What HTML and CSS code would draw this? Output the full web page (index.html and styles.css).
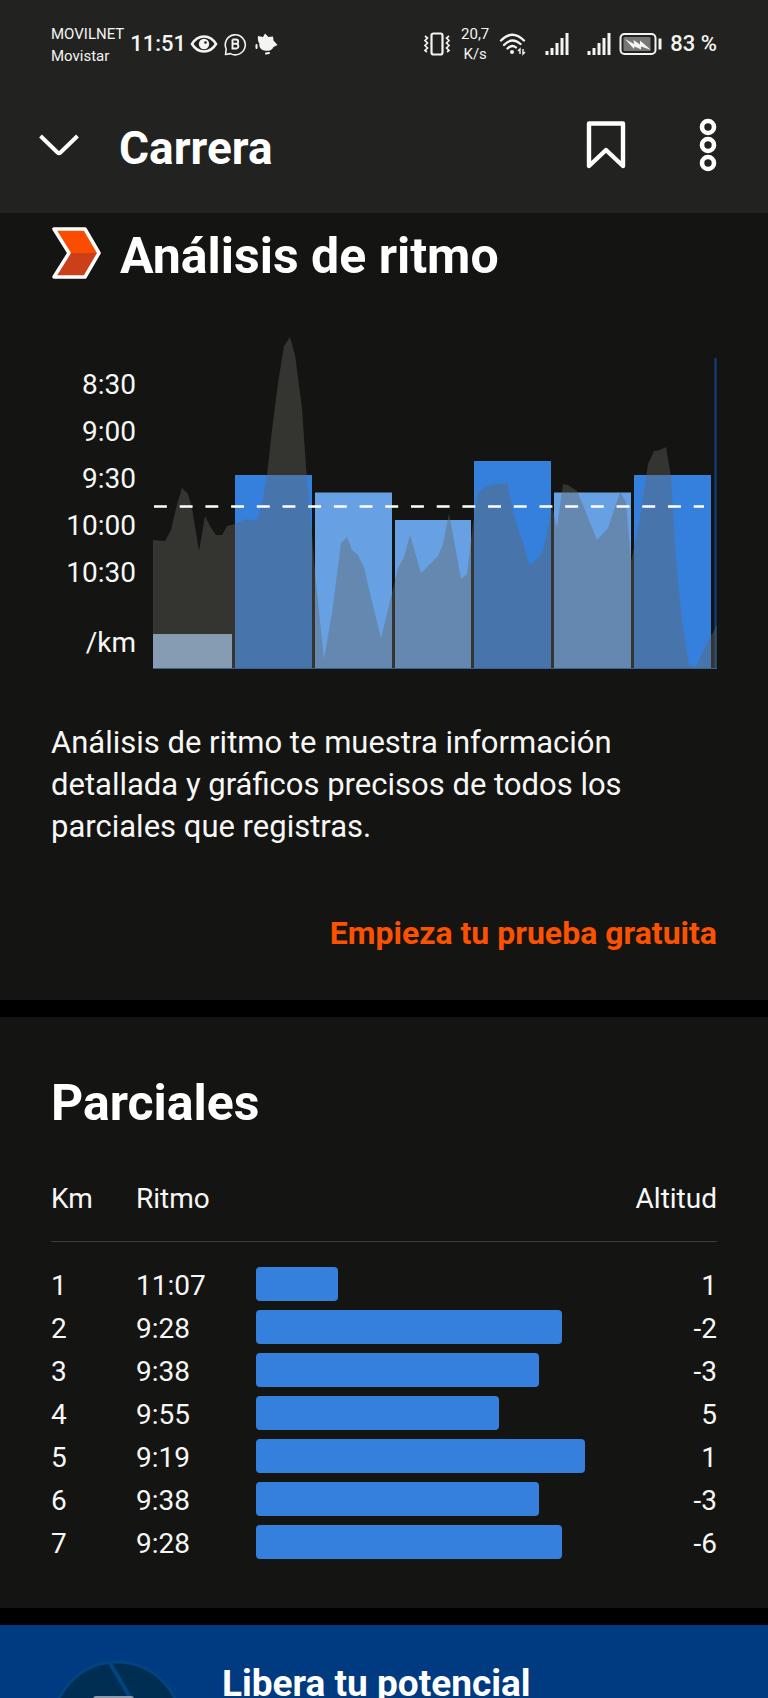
FILE: index.html
```html
<!DOCTYPE html>
<html lang="es">

<head>
    <meta charset="UTF-8">
    <meta name="viewport" content="width=device-width, initial-scale=1.0">
    <title>Carrera</title>
    <link rel="stylesheet" href="styles.css">
</head>

<body>
    <header class="top">
        <div class="status">
            <div class="status-group">
                <div class="carrier">MOVILNET<br>Movistar</div>
                <span class="clock">11:51</span>
                <svg class="eye" width="28" height="20" viewBox="0 0 28 20">
                    <path d="M2 10C5 5 9 2.500 14 2.500S23 5 26 10C23 15 19 17.500 14 17.500S5 15 2 10Z" fill="none" stroke="#f4f4f1" stroke-width="2.500" />
                    <circle cx="14" cy="10" r="5.200" fill="#f4f4f1" />
                    <circle cx="15.500" cy="8.500" r="1.300" fill="#222220" />
                </svg>
                <svg class="bubble" width="23" height="23" viewBox="0 0 23 23">
                    <path d="M1.500 21.500L2.200 16A10 10 0 1 1 6.500 20.600Z" fill="none" stroke="#f4f4f1" stroke-width="1.600" stroke-linejoin="round" />
                    <path d="M8.500 6.500V15.500H12.500A2.400 2.400 0 0 0 12.500 10.800H8.500M8.500 6.500H12A2.100 2.100 0 0 1 12 10.800" fill="none" stroke="#f4f4f1" stroke-width="1.900" />
                </svg>
                <svg width="23" height="22" viewBox="0 0 23 22">
                    <path d="M3 3L8 4L10 .5L13.500 4L18 3.500L18.500 7.500L22.500 12L18.500 14C17 17.500 13 18.500 9 17.500C5.500 16.500 4 14 4.300 10.500C3 8 2.500 5.500 3 3Z" fill="#f4f4f1" />
                    <path d="M1.500 12V15M11 20.500L14 20" stroke="#f4f4f1" stroke-width="2" stroke-linecap="round" />
                </svg>
            </div>
            <div class="status-group">
                <svg width="28" height="24" viewBox="0 0 28 24">
                    <rect x="8.500" y="1.500" width="11" height="21" rx="2" fill="none" stroke="#f4f4f1" stroke-width="2.200" />
                    <path d="M2 4L4.500 6L2 8.500L4.500 11L2 13.500L4.500 16L2 18.500L4 20M26 4L23.500 6L26 8.500L23.500 11L26 13.500L23.500 16L26 18.500L24 20" fill="none" stroke="#f4f4f1" stroke-width="1.700" />
                </svg>
                <div class="speed">20,7<br>K/s</div>
                <svg class="wifi" width="28" height="24" viewBox="0 0 28 24">
                    <path d="M2 8.500Q13 -3 25 8.500M5 13Q13 4.500 21.500 12M8.500 16.500Q13 12 17 15.500" fill="none" stroke="#f4f4f1" stroke-width="2.300" stroke-linecap="round" />
                    <circle cx="13" cy="20" r="2" fill="#f4f4f1" />
                    <path d="M19 19L21 17V22M24 17V22L26 20" fill="none" stroke="#f4f4f1" stroke-width="1.400" />
                </svg>
                <svg class="signal" width="24" height="24" viewBox="0 0 24 24">
                    <path d="M2 19V23M7 16V23M12 11V23M17 6V23M22 1V23" stroke="#f4f4f1" stroke-width="3" />
                </svg>
                <svg class="signal" width="24" height="24" viewBox="0 0 24 24">
                    <path d="M2 19V23M7 16V23M12 11V23M17 6V23M22 1V23" stroke="#f4f4f1" stroke-width="3" />
                </svg>
                <svg width="43" height="24" viewBox="0 0 43 24">
                    <rect x="1.500" y="2" width="35" height="20" rx="4" fill="none" stroke="#f4f4f1" stroke-width="2" />
                    <rect x="4.500" y="5" width="27" height="14" rx="1" fill="#777775" />
                    <path d="M6 7L15 12L14.500 8L21 12.500L21 8.500L32 18L22 14.500L22 17.500L15.500 14.500L15 17Z" fill="#f4f4f1" />
                    <path d="M41 6.500V17.500" stroke="#f4f4f1" stroke-width="3" />
                </svg>
                <span class="battery">83 %</span>
            </div>
        </div>
        <div class="appbar">
            <button class="icon-button" aria-label="Cerrar">
                <svg width="40" height="24" viewBox="0 0 40 24">
                    <path d="M1.500 3L18.500 19.500Q20 20.800 21.500 19.500L38.500 3" fill="none" stroke="#fff" stroke-width="4" />
                </svg>
            </button>
            <h1>Carrera</h1>
            <button class="icon-button" aria-label="Guardar">
                <svg width="40" height="48" viewBox="0 0 40 48">
                    <path d="M3 2.500H37V45L20 29L3 45Z" fill="none" stroke="#fff" stroke-width="4.400" stroke-linejoin="round" />
                </svg>
            </button>
            <button class="icon-button more" aria-label="Más opciones">
                <svg width="18" height="54" viewBox="0 0 18 54">
                    <g fill="none" stroke="#fff" stroke-width="4.600">
                        <circle cx="9" cy="9" r="6" />
                        <circle cx="9" cy="27" r="6" />
                        <circle cx="9" cy="45" r="6" />
                    </g>
                </svg>
            </button>
        </div>
    </header>

    <main>
        <section class="card pace">
            <div class="pace-title">
                <svg width="50" height="54" viewBox="0 0 50 54">
                    <path d="M3 3H34L48 27H18Z" fill="#fc4c02" />
                    <path d="M18 27H48L34 51H3Z" fill="#cc4019" />
                    <path d="M3 3H34L48 27L34 51H3L18 27Z" fill="none" stroke="#fff" stroke-width="3.500" stroke-linejoin="round" />
                </svg>
                <h2>Análisis de ritmo</h2>
            </div>

            <div class="chart">
                <ul class="axis">
                    <li>8:30</li>
                    <li>9:00</li>
                    <li>9:30</li>
                    <li>10:00</li>
                    <li>10:30</li>
                    <li class="unit">/km</li>
                </ul>
                <svg class="plot" viewBox="0 0 564 340" preserveAspectRatio="none">
                    <path d="M562.500 28V338" stroke="#0e4282" stroke-width="2" />
                    <rect x="0" y="304" width="79" height="34" fill="#9dc1e8" />
                    <g fill="#3580dc">
                        <rect x="82" y="145" width="77" height="193" />
                        <rect x="321" y="131" width="77" height="207" />
                        <rect x="481" y="145" width="77" height="193" />
                    </g>
                    <g fill="#67a1e4">
                        <rect x="162" y="162.500" width="77" height="175.500" />
                        <rect x="242" y="190" width="76" height="148" />
                        <rect x="401" y="162.500" width="77" height="175.500" />
                    </g>
                    <!-- elevation -->
                    <path fill="#646462" fill-opacity=".4" d="M0 338V210L12 211L18 200L20 191L24 175L29 158L35 164L39 178L46 221L52 186L57 196L63 205H69L74 196L82 194L93 189L104 190L109 173L114 145L119 100L125 53L131 16L137 7L142 25L149 78L153 137L159 203L162 243L171 329L179 283L188 213L194 207L199 220L205 225L211 237L217 263L228 308L239 263L245 238L251 227L257 205L268 243L274 237L285 226L290 214L296 183L308 249L314 244L320 193L325 163L334 156L344 154L354 153L362 190L370 212L376 235L386 228L391 217L399 177L404 197L410 154L415 155L424 161L432 180L444 210L455 198L460 183L467 162L473 172L478 232L487 187L495 134L501 121L507 120L513 117L518 147L523 230L529 290L536 335L543 337L553 315L564 295V338Z" />
                    <path d="M0 338.500H564" stroke="#3b6390" stroke-width="1.200" />
                    <path d="M1 176.500H551" stroke="#fff" stroke-width="2.600" stroke-dasharray="12.900 12.800" />
                </svg>
            </div>

            <p>Análisis de ritmo te muestra información detallada y gráficos precisos de todos los parciales que registras.</p>
            <a class="trial" href="#">Empieza tu prueba gratuita</a>
        </section>

        <section class="card splits">
            <h2>Parciales</h2>
            <table>
                <thead>
                    <tr>
                        <th class="km">Km</th>
                        <th class="ritmo">Ritmo</th>
                        <th></th>
                        <th class="alt">Altitud</th>
                    </tr>
                </thead>
                <tbody>
                    <tr><td>1</td><td>11:07</td><td class="track"><div class="bar" style="width: 25%"></div></td><td class="alt">1</td></tr>
                    <tr><td>2</td><td>9:28</td><td class="track"><div class="bar" style="width: 93%"></div></td><td class="alt">-2</td></tr>
                    <tr><td>3</td><td>9:38</td><td class="track"><div class="bar" style="width: 86%"></div></td><td class="alt">-3</td></tr>
                    <tr><td>4</td><td>9:55</td><td class="track"><div class="bar" style="width: 74%"></div></td><td class="alt">5</td></tr>
                    <tr><td>5</td><td>9:19</td><td class="track"><div class="bar" style="width: 100%"></div></td><td class="alt">1</td></tr>
                    <tr><td>6</td><td>9:38</td><td class="track"><div class="bar" style="width: 86%"></div></td><td class="alt">-3</td></tr>
                    <tr><td>7</td><td>9:28</td><td class="track"><div class="bar" style="width: 93%"></div></td><td class="alt">-6</td></tr>
                </tbody>
            </table>
        </section>

        <section class="promo">
            <svg width="132" height="132" viewBox="0 0 132 132">
                <circle cx="66" cy="66" r="64" fill="#002d52" stroke="#00457f" stroke-width="3" />
                <path d="M59 3L98 70" stroke="#00457f" stroke-width="4" />
                <rect x="42" y="36" width="41" height="70" rx="3" fill="#8e9aab" />
            </svg>
            <h3>Libera tu potencial</h3>
        </section>
    </main>
</body>

</html>
```
FILE: styles.css
```css
* {
    box-sizing: border-box;
}

body {
    margin: 0;
    display: flex;
    flex-direction: column;
    height: 100vh;
    background-color: #000;
    color: #f7f7f5;
    font-family: Roboto, "Liberation Sans", sans-serif;
    font-size: 28px;
    line-height: 36px;
}

main {
    display: flex;
    flex: 1;
    flex-direction: column;
    min-height: 0;
}

h1,
h2,
h3,
p,
ul {
    margin: 0;
    padding: 0;
}

h1,
h2,
h3 {
    color: #fff;
    font-weight: 700;
}

svg {
    display: block;
    flex: none;
}

.top {
    flex: none;
    padding: 22px 51px 9px;
    background-color: #222220;
}

.status {
    display: flex;
    justify-content: space-between;
    height: 44px;
    color: #f4f4f1;
}

.status-group {
    display: flex;
    align-items: center;
    gap: 8px;
}

.carrier,
.speed {
    font-size: 15px;
    line-height: 22px;
}

.carrier {
    padding-top: 2px;
}

.speed {
    margin: 0 2px;
    text-align: center;
    line-height: 20px;
}

.clock,
.battery {
    font-size: 22px;
    font-weight: 500;
}

.clock {
    margin-left: -2px;
    margin-right: -4px;
}

.bubble {
    margin-left: -2px;
}

.signal {
    margin-left: 10px;
}

.appbar {
    display: flex;
    align-items: center;
    height: 138px;
    padding-top: 20px;
    margin-left: -12px;
}

.appbar h1 {
    flex: 1;
    padding-top: 6px;
    padding-left: 40px;
    font-size: 46px;
    line-height: 56px;
}

.icon-button {
    padding: 0;
    border: 0;
    background: none;
}

.more {
    margin-left: 73px;
}

.card {
    flex: none;
    margin-bottom: 17px;
    padding: 0 51px;
    background-color: #141412;
}

.card h2 {
    font-size: 50px;
    line-height: 60px;
}

.pace {
    padding-top: 13px;
    padding-bottom: 46px;
}

.pace-title {
    display: flex;
    align-items: flex-start;
    gap: 19px;
}

.chart {
    display: flex;
    gap: 17px;
    margin-top: 44px;
}

.axis {
    width: 85px;
    padding-top: 37px;
    list-style: none;
    text-align: right;
}

.axis li {
    height: 47px;
}

.axis .unit {
    margin-top: 23px;
}

.plot {
    flex: 1;
    min-width: 0;
    height: 340px;
}

.pace p {
    margin-top: 50px;
    max-width: 600px;
    font-size: 31px;
    line-height: 42px;
}

.trial {
    display: block;
    margin-top: 64px;
    color: #fc5200;
    font-size: 32px;
    font-weight: 700;
    line-height: 42px;
    text-align: right;
    text-decoration: none;
}

.splits {
    padding-top: 56px;
    padding-bottom: 44px;
}

table {
    width: 100%;
    margin-top: 44px;
    border-collapse: collapse;
    table-layout: fixed;
}

th,
td {
    height: 43px;
    padding: 3px 0 0;
    font-weight: 400;
    text-align: left;
}

th {
    height: 64px;
    padding: 0 0 20px;
    border-bottom: 1px solid #3d3d3a;
}

.km {
    width: 85px;
}

.ritmo {
    width: 120px;
}

th.alt {
    width: 132px;
}

.alt {
    text-align: right;
}

.track {
    padding: 0;
}

/* space between the header line and the first row */
tbody::before {
    content: "";
    display: block;
    height: 21px;
}

.bar {
    height: 34px;
    border-radius: 4px;
    background-color: #3580dc;
}

.promo {
    display: flex;
    flex: 1;
    gap: 39px;
    min-height: 0;
    padding: 35px 51px 0;
    overflow: hidden;
    background-color: #003a80;
}

.promo h3 {
    font-size: 37px;
    line-height: 48px;
}
```
